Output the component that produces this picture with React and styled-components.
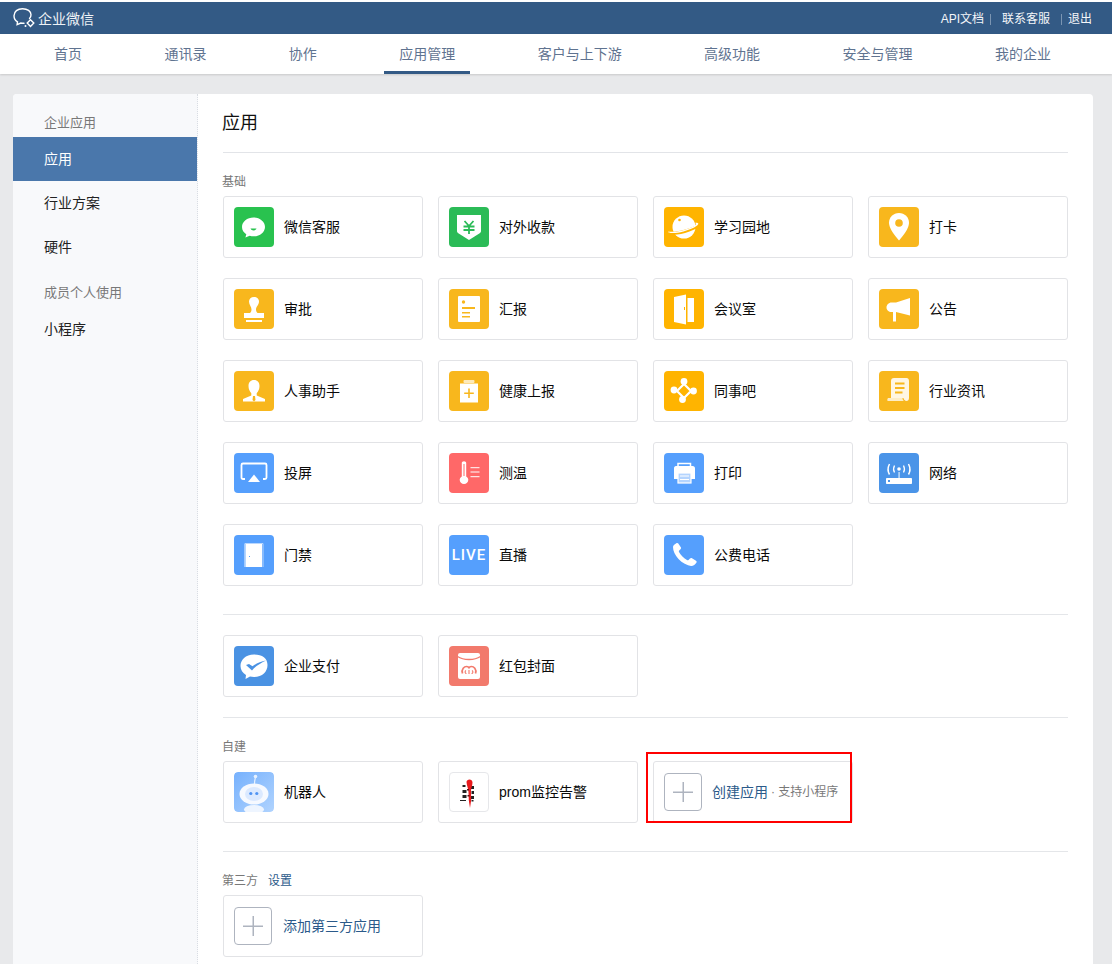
import React from "react";
import styled, { createGlobalStyle } from "styled-components";

const FONT = `"Liberation Sans", "Noto Sans CJK SC", "Noto Sans", sans-serif`;

const GREEN = "#29c24f";
const AMBER = "#f8b71d";
const GOLD = "#ffb400";
const BLUE = "#559ffd";

const icons = {
	chat: (
		<>
			<path d="M19.500 10.500c-6.300 0-11.500 4.200-11.500 9.400 0 3 1.700 5.600 4.300 7.300l-.9 3.300 4.300-1.800c1.200.4 2.500.6 3.800.6 6.300 0 11.500-4.200 11.500-9.400s-5.200-9.400-11.500-9.400z" fill="#fff" />
			<path d="M16.500 21.500h6c-.5 1.300-1.500 1.900-3 1.900s-2.500-.6-3-1.900z" fill={GREEN} />
		</>
	),
	shield: (
		<>
			<path d="M8 8h24v16c0 1-.5 1.700-1.300 2.200L20 33 9.300 26.200C8.500 25.700 8 25 8 24z" fill="#fff" />
			<path d="M15.500 14l4.500 5 4.500-5M14.500 19.500h11M14.500 23h11M20 19v8" fill="none" stroke="#2bbb57" strokeWidth="1.800" />
		</>
	),
	planet: (
		<>
			<circle cx="20" cy="20" r="11.500" fill="#fff" />
			<circle cx="15.500" cy="13" r="1.300" fill={GOLD} />
			<path d="M4.500 25.500C10 27 18 25.500 25 23c5-1.800 9-3.800 9.500-5.500" fill="none" stroke={GOLD} strokeWidth="3" />
			<path d="M4.500 24.500c-1.500 1.800 7 2.300 15 0s15.500-6 14.800-8c-.2-.6-1.700-.9-3.300-.6 0 0 1.300.6 1 1.300-.8 1.700-6.500 4.300-13 6-7 1.800-12.500 1.600-14.500 1.300z" fill="#fff" />
		</>
	),
	pin: (
		<>
			<path d="M20 6c-5.700 0-10 4.400-10 9.800 0 5.500 5 11.800 10 17.700 5-5.900 10-12.200 10-17.700C30 10.400 25.700 6 20 6z" fill="#fff" />
			<circle cx="20" cy="16" r="3.800" fill={AMBER} />
		</>
	),
	stamp: (
		<path d="M20 8c-3 0-5 2-5 4.500 0 3.500 2.500 5 2.500 8 0 1.500-.5 2.500-1.500 3.500H10v5h20v-5h-6.500c-1-1-1.500-2-1.500-3.500 0-3 3-4.500 3-8C25 10 23 8 20 8zM12 31h16v2H12z" fill="#fff" />
	),
	report: (
		<>
			<rect x="9" y="7" width="22" height="26" rx="1" fill="#fff" />
			<circle cx="14.500" cy="13" r="1.700" fill={AMBER} />
			<path d="M13 18h13v2H13zM13 23h8v1.600h-8zM13 27h8v1.600h-8z" fill={AMBER} />
		</>
	),
	person: (
		<>
			<path d="M20 9c-3.500 0-5.500 2.500-5.500 6 0 3 1.200 5.500 2.800 7.200v2.300L9 28v2.500h22V28l-8.300-3.500v-2.300c1.600-1.700 2.800-4.200 2.800-7.200 0-3.500-2-6-5.500-6z" fill="#fff" />
			<path d="M19 25h2l.5 4-1.500 1.500-1.500-1.500z" fill={AMBER} />
		</>
	),
	clipboard: (
		<>
			<rect x="11" y="12.500" width="18" height="19" fill="#fff" />
			<rect x="14.500" y="9" width="11" height="3" rx="1" fill="#fff" opacity=".7" />
			<path d="M19.200 17.500h1.600v4h4v1.600h-4v4h-1.600v-4h-4v-1.600h4z" fill={AMBER} />
		</>
	),
	door: (
		<>
			<path d="M10 8l12-2.500v30L10 33z" fill="#fff" />
			<path d="M23.500 9H30v24h-6.500z" fill="#fff" />
			<rect x="20" y="18" width="1" height="3" fill={GOLD} />
		</>
	),
	horn: (
		<>
			<path d="M31 9v17.500l-14-3.500h-4.500c-2.800 0-5-2-5-4.500s2.200-5 5-5H17z" fill="#fff" />
			<path d="M14 23h3v9.500h-3z" fill="#fff" />
		</>
	),
	nodes: (
		<>
			<path d="M20 13l7 7-7 7-7-7z" fill="none" stroke="#fff" strokeWidth="2.200" />
			<circle cx="20" cy="10.500" r="3.400" fill="#fff" />
			<circle cx="29.500" cy="20" r="3.400" fill="#fff" />
			<circle cx="18.500" cy="28.500" r="3.400" fill="#fff" />
			<circle cx="10" cy="19" r="3.400" fill="#fff" />
		</>
	),
	scroll: (
		<>
			<path d="M12 10c0-2 1-3 3-3h12.500c1.500 0 2.500 1.200 2.500 3v17c0 2-1 3-2.500 3s-3-1.500-3-3H12z" fill="#fff" opacity=".88" />
			<path d="M16 12.500h9.500M16 17h9.500M16 21.500h7.500" stroke={AMBER} strokeWidth="2" />
			<path d="M9 27h14.500c0 1.500.5 2.500 1.500 3H9c-1 0-1-2-0-3z" fill="#fff" opacity=".75" />
		</>
	),
	cast: (
		<>
			<path d="M11 26H9c-1 0-1.500-.5-1.500-1.500V12c0-1 .5-1.500 1.500-1.500h22c1 0 1.500.5 1.500 1.500v12.500c0 1-.5 1.500-1.500 1.500h-2" fill="none" stroke="#fff" strokeWidth="1.800" />
			<path d="M20 21.500L26 29H14z" fill="#fff" />
		</>
	),
	thermo: (
		<>
			<path d="M12.800 10c0-1 .9-1.800 2.200-1.800s2.200.8 2.200 1.800v13.400c1.300.8 2.100 2 2.100 3.400 0 2.400-1.900 4.200-4.300 4.200s-4.300-1.800-4.300-4.200c0-1.400.8-2.600 2.100-3.400z" fill="#fff" />
			<rect x="14.500" y="11" width="1" height="12" fill="#ff6868" />
			<path d="M21.500 14.700h9M21.500 19h9M21.500 23.700h9" stroke="#fff" strokeWidth="1" />
		</>
	),
	frame: (
		<>
			<rect x="11.500" y="9" width="16.500" height="23" fill="#fff" />
			<path d="M11 8.500h18V32" fill="none" stroke="#b9d7fe" strokeWidth="1" />
			<path d="M11 8.500V32" stroke="#b9d7fe" strokeWidth="1.500" />
			<rect x="15" y="21" width="1" height="1" fill={BLUE} />
		</>
	),
	printer: (
		<>
			<path d="M14 10.500h12.500v4H14z" fill="none" stroke="#fff" strokeWidth="1.500" />
			<path d="M12 13h16.500c1.800 0 2.500 1 2.500 2.500V26h-4v-5H14v5h-4V15.500c0-1.500.7-2.500 2-2.500z" fill="#fff" />
			<rect x="14" y="20" width="13" height="10" fill="#b4d4fe" stroke="#fff" strokeWidth="1.200" />
			<path d="M16 23h9M16 26.500h9" stroke="#fff" strokeWidth="1.200" />
		</>
	),
	router: (
		<>
			<rect x="7" y="25" width="26" height="6" rx=".8" fill="#fff" />
			<rect x="9" y="27" width="2" height="2" fill="#4a94e8" />
			<rect x="19.300" y="19" width="1.600" height="6" fill="#b9d7f7" />
			<circle cx="20" cy="16" r="1.800" fill="#fff" />
			<path d="M15.500 12.500c-1.200 2.300-1.200 4.900 0 7M24.500 12.500c1.200 2.300 1.200 4.900 0 7" fill="none" stroke="#fff" strokeWidth="1.300" />
			<path d="M10.500 11c-1.800 3.500-1.800 7.500 0 10.500M29.500 11c1.800 3.500 1.800 7.500 0 10.500" fill="none" stroke="#fff" strokeWidth="1.500" />
		</>
	),
	phone: (
		<path d="M12 8.500c-1.500.8-3 2-3 3.500 0 4 2 8 5.500 12s9 6.500 12.500 7c2 .2 4.500-1.700 5.500-3.500.4-.7.2-1.200-.5-1.800l-4-2.500c-.8-.5-1.400-.3-2 .3l-1.500 1.500c-.4.400-.9.400-1.500.1-3-1.500-6.500-5-8-8-.3-.6-.2-1.100.2-1.500l1.300-1.300c.6-.6.8-1.300.3-2l-2.500-3.700c-.5-.7-1.200-.8-2.300-.1z" fill="#fff" />
	),
	pay: (
		<>
			<path d="M20 8.500C11.500 8.500 6.500 14 6.500 20c0 3.800 2.200 7 5.500 9l-.5 4 4.500-2.500c1.300.3 2.600.5 4 .5 8.500 0 13.500-5.500 13.500-12s-5-10.500-13.500-10.500z" fill="#fff" />
			<path d="M12 19l6 5.500c3.800-4.500 8-7 14-10-5 .8-9.500 2.800-13.500 5.800L15 18z" fill="#4a92e3" />
		</>
	),
	packet: (
		<>
			<rect x="9" y="7" width="22" height="26" rx="2" fill="#fff" />
			<path d="M8.500 10.500c3 2 7 3 11.500 3s8.500-1 11.500-3" fill="none" stroke="#f27a6c" strokeWidth="1.500" />
			<path d="M13.500 27.500c-1.500-4.500 2-7 4-7 1.500 0 2.500.8 2.500 2 0-1.200 1-2 2.500-2 2 0 5.500 2.500 4 7" fill="none" stroke="#f27a6c" strokeWidth="1.700" />
			<path d="M17 24.500c-1.500 1-1 3 .5 3M23 24.500c1.500 1 1 3-.5 3M20 24v4" fill="none" stroke="#f27a6c" strokeWidth="1.100" />
		</>
	),
};

const basics = [
	{ name: "微信客服", bg: GREEN, icon: "chat" },
	{ name: "对外收款", bg: "#2bbb57", icon: "shield" },
	{ name: "学习园地", bg: GOLD, icon: "planet" },
	{ name: "打卡", bg: AMBER, icon: "pin" },
	{ name: "审批", bg: AMBER, icon: "stamp" },
	{ name: "汇报", bg: AMBER, icon: "report" },
	{ name: "会议室", bg: GOLD, icon: "door" },
	{ name: "公告", bg: AMBER, icon: "horn" },
	{ name: "人事助手", bg: AMBER, icon: "person" },
	{ name: "健康上报", bg: AMBER, icon: "clipboard" },
	{ name: "同事吧", bg: GOLD, icon: "nodes" },
	{ name: "行业资讯", bg: AMBER, icon: "scroll" },
	{ name: "投屏", bg: BLUE, icon: "cast" },
	{ name: "测温", bg: "#ff6868", icon: "thermo" },
	{ name: "打印", bg: BLUE, icon: "printer" },
	{ name: "网络", bg: "#4a94e8", icon: "router" },
	{ name: "门禁", bg: BLUE, icon: "frame" },
	{ name: "直播", bg: BLUE, live: true },
	{ name: "公费电话", bg: BLUE, icon: "phone" },
];

const extras = [
	{ name: "企业支付", bg: "#4a92e3", icon: "pay" },
	{ name: "红包封面", bg: "#f27a6c", icon: "packet" },
];

const navItems = ["首页", "通讯录", "协作", "应用管理", "客户与上下游", "高级功能", "安全与管理", "我的企业"];

function AppIcon({ bg, icon, live }) {
	return (
		<IconTile $bg={bg}>
			{live ? (
				<LiveMark>LIVE</LiveMark>
			) : (
				<svg width="40" height="40" viewBox="0 0 40 40">
					{icons[icon]}
				</svg>
			)}
		</IconTile>
	);
}

function PlusTile() {
	return (
		<PlusBox>
			<svg width="20" height="20" viewBox="0 0 20 20">
				<path d="M9.500 0h1.500v20H9.500zM0 9.500h20V11H0z" fill="#aeb4bf" />
			</svg>
		</PlusBox>
	);
}

function Robot() {
	return (
		<svg width="40" height="40" viewBox="0 0 40 40">
			<defs>
				<linearGradient id="robotBg" x1="0" y1="0" x2="1" y2="1">
					<stop offset="0" stopColor="#76b1fd" />
					<stop offset="1" stopColor="#b0d3fe" />
				</linearGradient>
			</defs>
			<rect width="40" height="40" rx="4" fill="url(#robotBg)" />
			<path d="M20.500 12c0-3 .5-5 1-7" fill="none" stroke="#e6f1ff" strokeWidth="1.200" />
			<circle cx="21.500" cy="4.500" r="1.800" fill="#e6f1ff" />
			<ellipse cx="20" cy="37.500" rx="10" ry="4.500" fill="#eef5ff" />
			<ellipse cx="20" cy="22" rx="14.500" ry="10.500" fill="#f6f9ff" />
			<ellipse cx="20" cy="22" rx="9" ry="7" fill="#dbe9ff" />
			<circle cx="16.800" cy="21.500" r="1.600" fill="#4f93f3" />
			<circle cx="22.800" cy="21.500" r="1.600" fill="#4f93f3" />
		</svg>
	);
}

function PromLogo() {
	return (
		<svg width="38" height="38" viewBox="0 0 38 38">
			<path d="M12.500 12h3v2h-3zM21 13h3v3h-3zM12.500 17h4v3h-4zM21.500 18h2.500v3h-2.500zM12.500 22h4v3h-4zM21 23h3v3h-3zM10 27h6v1h-6zM21.500 27h2v1.500h-2z" fill="#222" />
			<path d="M16.500 9c0-1.500 1.500-2.500 3-2.500s3 1 3 3c0 3-1.500 5.500-1.500 8.500l.2 9-1.200 8-1.200-7.500-.3-8c0-4-2-7.500-2-10.500z" fill="#e8191c" />
			<path d="M17 16h2v1.500h-2zM17.500 22h2v1.500h-2z" fill="#5a1010" />
		</svg>
	);
}

function Logo() {
	return (
		<svg width="22" height="22" viewBox="0 0 22 22">
			<path d="M16.500 11.500c1-1 1.500-2.300 1.500-3.700C18 4.300 14.400 1.700 9.500 1.700S1 4.500 1 8.700c0 2.700 1.300 4.800 3.500 6.200l-.4 2.800 3.700-1.700c1 .2 2 .3 3.200.2" fill="none" stroke="#fff" strokeWidth="1.400" strokeLinecap="round" />
			<path d="M17.500 12.800l3.300 3.300-3.300 3.300-3.300-3.300z" fill="none" stroke="#fff" strokeWidth="1.400" />
			<circle cx="12.500" cy="19" r="1" fill="#fff" />
		</svg>
	);
}

export default function App() {
	return (
		<Page>
			<GlobalStyle />
			<TopBar>
				<Brand>
					<Logo />
					<BrandName>企业微信</BrandName>
				</Brand>
				<TopLinks>
					<TopLink>API文档</TopLink>
					<TopSep $left={6} $right={11} />
					<TopLink>联系客服</TopLink>
					<TopSep $left={11} $right={6} />
					<TopLink>退出</TopLink>
				</TopLinks>
			</TopBar>
			<Nav>
				{navItems.map((item) => (
					<NavItem key={item} $active={item === "应用管理"}>
						{item}
					</NavItem>
				))}
			</Nav>
			<Panel>
				<Sidebar>
					<SideLabel $first>企业应用</SideLabel>
					<SideItem $active>应用</SideItem>
					<SideItem>行业方案</SideItem>
					<SideItem>硬件</SideItem>
					<SideLabel>成员个人使用</SideLabel>
					<SideItem>小程序</SideItem>
				</Sidebar>
				<Main>
					<Title>应用</Title>
					<Section $pad="21px 0 28px">
						<SectionLabel>基础</SectionLabel>
						<CardGrid>
							{basics.map((app) => (
								<Card key={app.name}>
									<AppIcon bg={app.bg} icon={app.icon} live={app.live} />
									<CardName>{app.name}</CardName>
								</Card>
							))}
						</CardGrid>
					</Section>
					<Section $pad="20px 0 20px">
						<CardGrid>
							{extras.map((app) => (
								<Card key={app.name}>
									<AppIcon bg={app.bg} icon={app.icon} />
									<CardName>{app.name}</CardName>
								</Card>
							))}
						</CardGrid>
					</Section>
					<Section $pad="21px 0 28px">
						<SectionLabel>自建</SectionLabel>
						<CardGrid>
							<Card>
								<ImageTile>
									<Robot />
								</ImageTile>
								<CardName>机器人</CardName>
							</Card>
							<Card>
								<ImageTile $framed>
									<PromLogo />
								</ImageTile>
								<CardName>prom监控告警</CardName>
							</Card>
							<Card>
								<PlusTile />
								<CardLink $gap={8}>创建应用</CardLink>
								<CardHint>· 支持小程序</CardHint>
								<Highlight />
							</Card>
						</CardGrid>
					</Section>
					<Section $pad="21px 0 20px" $last>
						<SectionLabel>
							第三方<SettingLink>设置</SettingLink>
						</SectionLabel>
						<CardGrid>
							<Card>
								<PlusTile />
								<CardLink $gap={9}>添加第三方应用</CardLink>
							</Card>
						</CardGrid>
					</Section>
				</Main>
			</Panel>
		</Page>
	);
}

const GlobalStyle = createGlobalStyle`
	html, body {
		margin: 0;
		padding: 0;
		height: 964px;
		overflow: hidden;
		background: #e8e9eb;
		font-family: ${FONT};
	}
`;

const Page = styled.div`
	width: 1112px;
	height: 964px;
	overflow: hidden;
	box-sizing: border-box;
	border-top: 2px solid #fff;
	background: #e8e9eb;
`;

const TopBar = styled.header`
	height: 32px;
	background: #335a85;
	display: flex;
	align-items: center;
	justify-content: space-between;
	padding: 0 20px 0 13px;
	color: #fff;
`;

const Brand = styled.div`
	display: flex;
	align-items: center;
	gap: 3px;
`;

const BrandName = styled.span`
	font-size: 14px;
	color: #eef2f6;
`;

const TopLinks = styled.div`
	display: flex;
	align-items: center;
	margin-top: 2px;
`;

const TopLink = styled.a`
	font-size: 12px;
	line-height: 16px;
	color: #f4f6f9;
`;

const TopSep = styled.i`
	width: 1px;
	height: 11px;
	background: #7b95b2;
	margin: 0 ${(p) => p.$right}px 0 ${(p) => p.$left}px;
`;

const Nav = styled.nav`
	height: 40px;
	background: #fff;
	box-shadow: 0 1px 2px rgba(0, 0, 0, 0.14);
	display: flex;
	justify-content: space-between;
	padding: 0 46px 0 39px;
	position: relative;
`;

const NavItem = styled.a`
	padding: 0 15px;
	font-size: 14px;
	line-height: 40px;
	color: #5f7390;
	box-sizing: border-box;
	border-bottom: 3px solid ${(p) => (p.$active ? "#335a85" : "transparent")};
`;

const Panel = styled.div`
	margin: 20px 19px 0 13px;
	height: 900px;
	display: flex;
	background: #fff;
	border-radius: 4px;
	overflow: hidden;
`;

const Sidebar = styled.aside`
	width: 185px;
	flex: none;
	box-sizing: border-box;
	background: #f8f9fb;
	border-right: 1px dotted #d9dde3;
`;

const SideLabel = styled.div`
	box-sizing: border-box;
	height: ${(p) => (p.$first ? 43 : 38)}px;
	padding: ${(p) => (p.$first ? 20 : 15)}px 0 0 31px;
	font-size: 13px;
	line-height: 18px;
	color: #787878;
`;

const SideItem = styled.div`
	height: 44px;
	line-height: 44px;
	padding-left: 31px;
	font-size: 14px;
	color: ${(p) => (p.$active ? "#fff" : "#222")};
	background: ${(p) => (p.$active ? "#4a77ab" : "transparent")};
`;

const Main = styled.main`
	flex: 1;
	padding: 0 25px;
`;

const Title = styled.h1`
	margin: 0;
	height: 59px;
	box-sizing: border-box;
	padding-top: 16px;
	font-size: 18px;
	line-height: 26px;
	font-weight: 400;
	color: #111;
	border-bottom: 1px solid #e2e4e8;
	text-indent: -1px;
`;

const Section = styled.section`
	padding: ${(p) => p.$pad};
	border-bottom: ${(p) => (p.$last ? "0 none" : "1px solid #e4e6e9")};
`;

const SectionLabel = styled.div`
	height: 22px;
	font-size: 12px;
	line-height: 17px;
	color: #787878;
	text-indent: -1px;
`;

const SettingLink = styled.a`
	margin-left: 10px;
	color: #2b5a8a;
`;

const CardGrid = styled.div`
	display: grid;
	grid-template-columns: repeat(4, 200px);
	gap: 20px 15px;
`;

const Card = styled.div`
	position: relative;
	height: 62px;
	box-sizing: border-box;
	border: 1px solid #e2e3e6;
	border-radius: 3px;
	padding: 0 10px;
	display: flex;
	align-items: center;
	background: #fff;
`;

const IconTile = styled.div`
	width: 40px;
	height: 40px;
	flex: none;
	border-radius: 4px;
	background: ${(p) => p.$bg};
	display: flex;
	align-items: center;
	justify-content: center;
`;

const ImageTile = styled.div`
	width: 40px;
	height: 40px;
	flex: none;
	box-sizing: border-box;
	border-radius: 4px;
	overflow: hidden;
	border: ${(p) => (p.$framed ? "1px solid #e6e7ea" : "0 none")};
`;

const LiveMark = styled.span`
	font-family: Roboto, "Liberation Sans", sans-serif;
	font-size: 15px;
	font-weight: 500;
	letter-spacing: 1px;
	color: #fff;
`;

const PlusBox = styled.div`
	width: 38px;
	height: 38px;
	flex: none;
	box-sizing: border-box;
	border: 1px solid #aeb4bf;
	border-radius: 4px;
	margin-right: 2px;
	display: flex;
	align-items: center;
	justify-content: center;
`;

const CardName = styled.span`
	margin-left: 10px;
	font-size: 14px;
	line-height: 20px;
	color: #0a0a0a;
	white-space: nowrap;
`;

const CardLink = styled.a`
	margin-left: ${(p) => p.$gap}px;
	font-size: 14px;
	line-height: 20px;
	color: #2b5a8a;
	white-space: nowrap;
`;

const CardHint = styled.span`
	margin-left: 3px;
	font-size: 12px;
	line-height: 20px;
	color: #787878;
	white-space: nowrap;
`;

const Highlight = styled.div`
	position: absolute;
	left: -8px;
	top: -10px;
	width: 206px;
	height: 71px;
	box-sizing: border-box;
	border: 2px solid #f00;
	pointer-events: none;
`;
